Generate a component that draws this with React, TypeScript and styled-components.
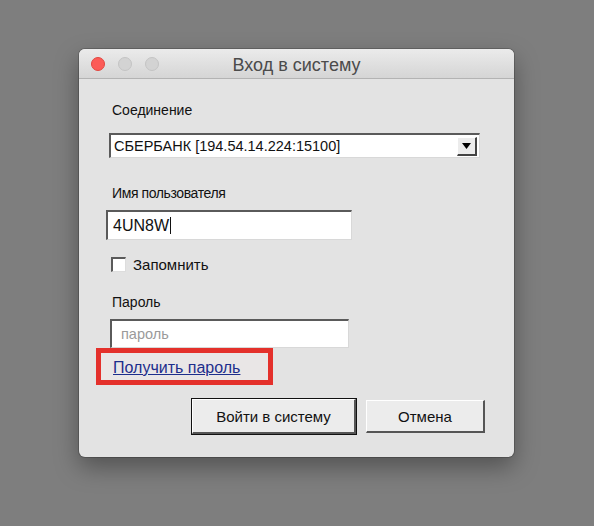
import React from 'react';
import styled, { createGlobalStyle } from 'styled-components';

const GlobalStyle = createGlobalStyle`
  html, body {
    margin: 0;
    padding: 0;
    background: #7e7e7e;
  }
  body {
    width: 594px;
    height: 526px;
    overflow: hidden;
  }
`;

const Page = styled.div`
  padding: 49px 0 0 79px;
`;

const Window = styled.div`
  width: 435px;
  height: 408px;
  background: #e3e3e3;
  border-radius: 6px;
  overflow: hidden;
  box-shadow: 0 0 0 1px rgba(0, 0, 0, 0.18), 0 10px 24px rgba(0, 0, 0, 0.35);
  display: flex;
  flex-direction: column;
  font-family: 'Liberation Sans', Arial, sans-serif;
`;

const TitleBar = styled.div`
  height: 29px;
  flex-shrink: 0;
  background: linear-gradient(#ebebeb, #d5d5d5);
  border-bottom: 1px solid #b3b3b3;
  display: flex;
  align-items: center;
  padding-left: 12px;
  position: relative;
`;

const Light = styled.span<{ $color: string; $edge: string }>`
  width: 12px;
  height: 12px;
  border-radius: 50%;
  background: ${p => p.$color};
  border: 1px solid ${p => p.$edge};
  margin-right: 13px;
`;

const Title = styled.div`
  position: absolute;
  left: 0;
  right: 0;
  top: 6px;
  text-align: center;
  font-size: 18px;
  color: #4b4b4b;
  pointer-events: none;
`;

const Body = styled.div`
  display: flex;
  flex-direction: column;
  padding: 23px 0 0 31px;
  font-size: 14px;
  color: #111;
`;

const Label = styled.div<{ $tight?: boolean }>`
  height: 16px;
  line-height: 16px;
  padding-left: 2px;
  font-size: 14px;
  letter-spacing: ${p => (p.$tight ? '-0.4px' : '0')};
`;

const Sunken = styled.div<{ $width: number; $height: number; $shift?: number }>`
  box-sizing: border-box;
  width: ${p => p.$width}px;
  height: ${p => p.$height}px;
  margin-left: ${p => p.$shift ?? 0}px;
  background: #fff;
  border-top: 2px solid #5a5a5a;
  border-left: 2px solid #5a5a5a;
  border-right: 1px solid #d8d8d8;
  border-bottom: 1px solid #d8d8d8;
  display: flex;
  align-items: center;
  padding-left: 3px;
`;

const SelectBox = styled(Sunken)`
  font-size: 14.5px;
  justify-content: space-between;
  padding-right: 2px;
`;

const DropButton = styled.div`
  box-sizing: border-box;
  width: 20px;
  height: 19px;
  background: #ececec;
  border-top: 1px solid #fff;
  border-left: 1px solid #fff;
  border-right: 2px solid #444;
  border-bottom: 2px solid #444;
  display: flex;
  align-items: center;
  justify-content: center;
`;

const Value = styled.span`
  font-size: 16px;
  padding-left: 2px;
`;

const Caret = styled.span`
  width: 1px;
  height: 17px;
  background: #111;
  margin-left: 1px;
`;

const Placeholder = styled.span`
  color: #9a9a9a;
  font-size: 14.5px;
  padding-left: 6px;
`;

const CheckRow = styled.div`
  display: flex;
  align-items: center;
  gap: 7px;
  padding-left: 1px;
  font-size: 15px;
`;

const CheckBox = styled.span`
  box-sizing: border-box;
  width: 15px;
  height: 15px;
  background: #fff;
  border-top: 2px solid #5a5a5a;
  border-left: 2px solid #5a5a5a;
  border-right: 1px solid #ddd;
  border-bottom: 1px solid #ddd;
`;

const Highlight = styled.div`
  box-sizing: border-box;
  width: 177px;
  height: 37px;
  margin-left: -14px;
  border: 5px solid #e4302b;
  background: #e9e6e6;
  display: flex;
  align-items: center;
  padding-left: 12px;
`;

const Link = styled.a`
  color: #1d2e8c;
  text-decoration: underline;
  font-size: 16px;
  padding-top: 2px;
`;

const Buttons = styled.div`
  display: flex;
  gap: 10px;
  padding-left: 82px;
  align-items: flex-start;
`;

const Button = styled.button<{ $width: number; $default?: boolean }>`
  box-sizing: border-box;
  width: ${p => p.$width}px;
  height: ${p => (p.$default ? 35 : 33)}px;
  margin-top: ${p => (p.$default ? 0 : 1)}px;
  font-family: 'Liberation Sans', Arial, sans-serif;
  font-size: 15px;
  color: #111;
  background: #ececec;
  border-top: 1px solid #fff;
  border-left: 1px solid #fff;
  border-right: 2px solid #555;
  border-bottom: 2px solid #555;
  outline: ${p => (p.$default ? '1px solid #111' : 'none')};
  outline-offset: 0;
  padding: 0;
`;

const Gap = styled.div<{ $h: number }>`
  height: ${p => p.$h}px;
  flex-shrink: 0;
`;

export default function App() {
  return (
    <>
      <GlobalStyle />
      <Page>
        <Window>
          <TitleBar>
            <Light $color="#fc5b57" $edge="#e2463f" />
            <Light $color="#d3d3d3" $edge="#c4c4c4" />
            <Light $color="#d3d3d3" $edge="#c4c4c4" />
            <Title>Вход в систему</Title>
          </TitleBar>
          <Body>
            <Label>Соединение</Label>
            <Gap $h={15} />
            <SelectBox $width={371} $height={25} $shift={-1}>
              <span>СБЕРБАНК [194.54.14.224:15100]</span>
              <DropButton>
                <svg width="9" height="6" viewBox="0 0 9 6">
                  <path d="M0 0 H9 L4.5 6 Z" fill="#000" />
                </svg>
              </DropButton>
            </SelectBox>
            <Gap $h={27} />
            <Label $tight>Имя пользователя</Label>
            <Gap $h={9} />
            <Sunken $width={246} $height={30} $shift={-4}>
              <Value>4UN8W</Value>
              <Caret />
            </Sunken>
            <Gap $h={16} />
            <CheckRow>
              <CheckBox />
              <span>Запомнить</span>
            </CheckRow>
            <Gap $h={21} />
            <Label>Пароль</Label>
            <Gap $h={9} />
            <Sunken $width={239} $height={29}>
              <Placeholder>пароль</Placeholder>
            </Sunken>
            <Highlight>
              <Link href="#">Получить пароль</Link>
            </Highlight>
            <Gap $h={14} />
            <Buttons>
              <Button $width={164} $default>Войти в систему</Button>
              <Button $width={119}>Отмена</Button>
            </Buttons>
          </Body>
        </Window>
      </Page>
    </>
  );
}
